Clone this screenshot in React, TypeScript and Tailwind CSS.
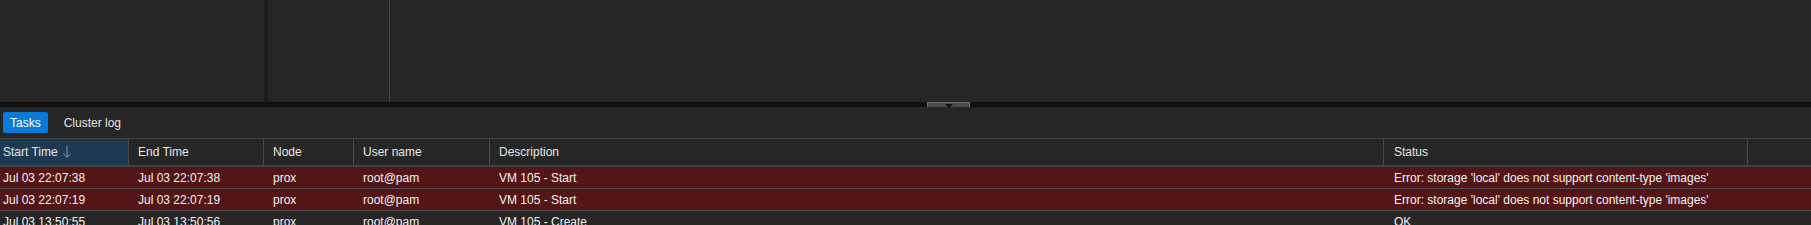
const columns = [
  { label: "Start Time", width: "w-[129px]", pad: "pl-[3px]" },
  { label: "End Time", width: "w-[135px]", pad: "pl-[9px]" },
  { label: "Node", width: "w-[90px]", pad: "pl-[9px]" },
  { label: "User name", width: "w-[136px]", pad: "pl-[9px]" },
  { label: "Description", width: "w-[894px]", pad: "pl-[9px]" },
  { label: "Status", width: "w-[364px]", pad: "pl-[10px]" },
];

type Task = {
  start: string;
  end: string;
  node: string;
  user: string;
  desc: string;
  status: string;
  error?: boolean;
};

const tasks: Task[] = [
  {
    start: "Jul 03 22:07:38",
    end: "Jul 03 22:07:38",
    node: "prox",
    user: "root@pam",
    desc: "VM 105 - Start",
    status: "Error: storage 'local' does not support content-type 'images'",
    error: true,
  },
  {
    start: "Jul 03 22:07:19",
    end: "Jul 03 22:07:19",
    node: "prox",
    user: "root@pam",
    desc: "VM 105 - Start",
    status: "Error: storage 'local' does not support content-type 'images'",
    error: true,
  },
  {
    start: "Jul 03 13:50:55",
    end: "Jul 03 13:50:56",
    node: "prox",
    user: "root@pam",
    desc: "VM 105 - Create",
    status: "OK",
  },
];

const TaskRow = ({ task }: { task: Task }) => {
  const cells = [task.start, task.end, task.node, task.user, task.desc, task.status];
  return (
    <div
      className={`flex h-[22px] shrink-0 items-center border-b border-[#4f4f4f] ${
        task.error ? "bg-[#541517]" : "bg-[#262626]"
      }`}
    >
      {cells.map((value, i) => (
        <div
          key={i}
          className={`${columns[i].width} ${columns[i].pad} shrink-0 truncate text-[#f2f2f2]`}
        >
          {value}
        </div>
      ))}
      <div className="flex-1" />
    </div>
  );
};

export default function App() {
  return (
    <div className="flex h-[225px] w-[1811px] flex-col overflow-hidden bg-[#262626] font-['Liberation_Sans',Arial,sans-serif] text-[12px]">
      {/* upper panels */}
      <div className="flex h-[102px] shrink-0">
        <div className="w-[264px] bg-[#262626]" />
        <div className="w-[4px] bg-[#1c1c1c]" />
        <div className="w-[122px] border-r border-[#464646] bg-[#262626]" />
        <div className="flex-1 bg-[#262626]" />
      </div>

      {/* splitter */}
      <div className="relative h-[5px] shrink-0 bg-[#101010]">
        <div className="absolute left-[927px] top-0 flex h-[5px] w-[43px] justify-center border border-b-0 border-[#6e6e6e] bg-[#4c4c4c]">
          <svg width="8" height="4" viewBox="0 0 8 4" className="mt-[1px]">
            <path d="M0 0h8L4 4z" fill="#111" />
          </svg>
        </div>
      </div>

      {/* tabs */}
      <div className="flex h-[31px] shrink-0 items-start gap-[16px] px-[3px] pt-[5px]">
        <button
          type="button"
          className="h-[21px] rounded-[2px] bg-[#0b7ad6] px-[7px] text-white"
        >
          Tasks
        </button>
        <button type="button" className="h-[21px] text-[#e4e4e4]">
          Cluster log
        </button>
      </div>

      {/* grid header */}
      <div className="flex h-[29px] shrink-0 border-t border-b-2 border-[#414141]">
        {columns.map((col, i) => (
          <div
            key={col.label}
            className={`${col.width} ${col.pad} flex shrink-0 items-center border-r border-[#474747] text-[#e6e6e6] ${
              i === 0 ? "bg-[#1d3a52]" : ""
            }`}
          >
            {col.label}
            {i === 0 && (
              <svg width="10" height="14" viewBox="0 0 10 14" className="ml-[4px]">
                <path d="M5 1v11M1.5 8.5L5 12.5l3.5-4" stroke="#8b96a0" strokeWidth="1" fill="none" />
              </svg>
            )}
          </div>
        ))}
        <div className="flex-1" />
      </div>

      {/* rows */}
      {tasks.map((task, i) => (
        <TaskRow key={i} task={task} />
      ))}
    </div>
  );
}
